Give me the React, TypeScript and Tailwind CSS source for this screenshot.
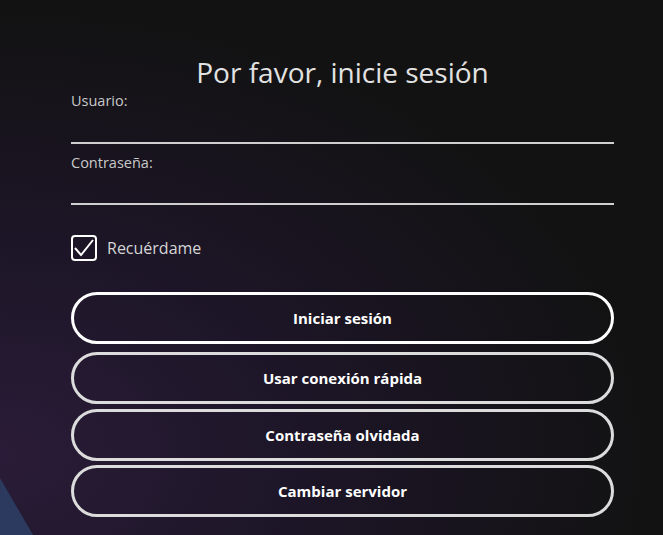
import { useState } from "react";

const buttons = ["Iniciar sesión", "Usar conexión rápida", "Contraseña olvidada", "Cambiar servidor"];
const gaps = ["mt-0", "mt-[8px]", "mt-[5px]", "mt-[4px]"];

export default function App() {
  const [remember, setRemember] = useState(true);

  return (
    <div className="relative h-[535px] w-full overflow-hidden bg-[#121212] font-['Open_Sans',sans-serif]">
      {/* background tint + corner shape */}
      <div className="absolute inset-0 bg-[radial-gradient(ellipse_at_0%_85%,#2a1c38_0%,#1c1526_35%,#121212_70%)]" />
      <svg className="absolute bottom-0 left-0" width="60" height="80" viewBox="0 0 60 80">
        <polygon points="0,23 33,80 0,80" fill="#2b3a5e" />
      </svg>

      <div className="relative ml-[71px] w-[543px] pt-[55px]">
        <h1 className="mb-[2px] text-center text-[28px] leading-[34px] text-[#e2e2e2]">Por favor, inicie sesión</h1>

        <label className="block text-[14.5px] leading-[20px] text-[#c9c9c9]">Usuario:</label>
        <input className="block h-[33px] w-full border-b-2 border-[#cfcfcf] bg-transparent text-white outline-none" />

        <label className="mt-[9px] block text-[14.5px] leading-[20px] text-[#c9c9c9]">Contraseña:</label>
        <input type="password" className="block h-[32px] w-full border-b-2 border-[#cfcfcf] bg-transparent text-white outline-none" />

        <div className="mt-[30px] flex items-center gap-[10px]">
          <button
            onClick={() => setRemember(!remember)}
            className="flex h-[26px] w-[26px] items-center justify-center rounded-[4px] border-2 border-white"
          >
            {remember && (
              <svg width="22" height="22" viewBox="0 0 22 22">
                <path d="M2 11 L8 18 L20 3" fill="none" stroke="white" strokeWidth="2" />
              </svg>
            )}
          </button>
          <span className="text-[16px] text-[#d6d6d6]">Recuérdame</span>
        </div>

        <div className="mt-[31px] flex flex-col">
          {buttons.map((b, i) => (
            <button
              key={b}
              className={`${gaps[i]} h-[52px] w-full rounded-full border-[3px] text-[15px] font-bold text-white ${
                i === 0 ? "border-white" : "border-[#dcdcdc]"
              }`}
            >
              {b}
            </button>
          ))}
        </div>
      </div>
    </div>
  );
}
